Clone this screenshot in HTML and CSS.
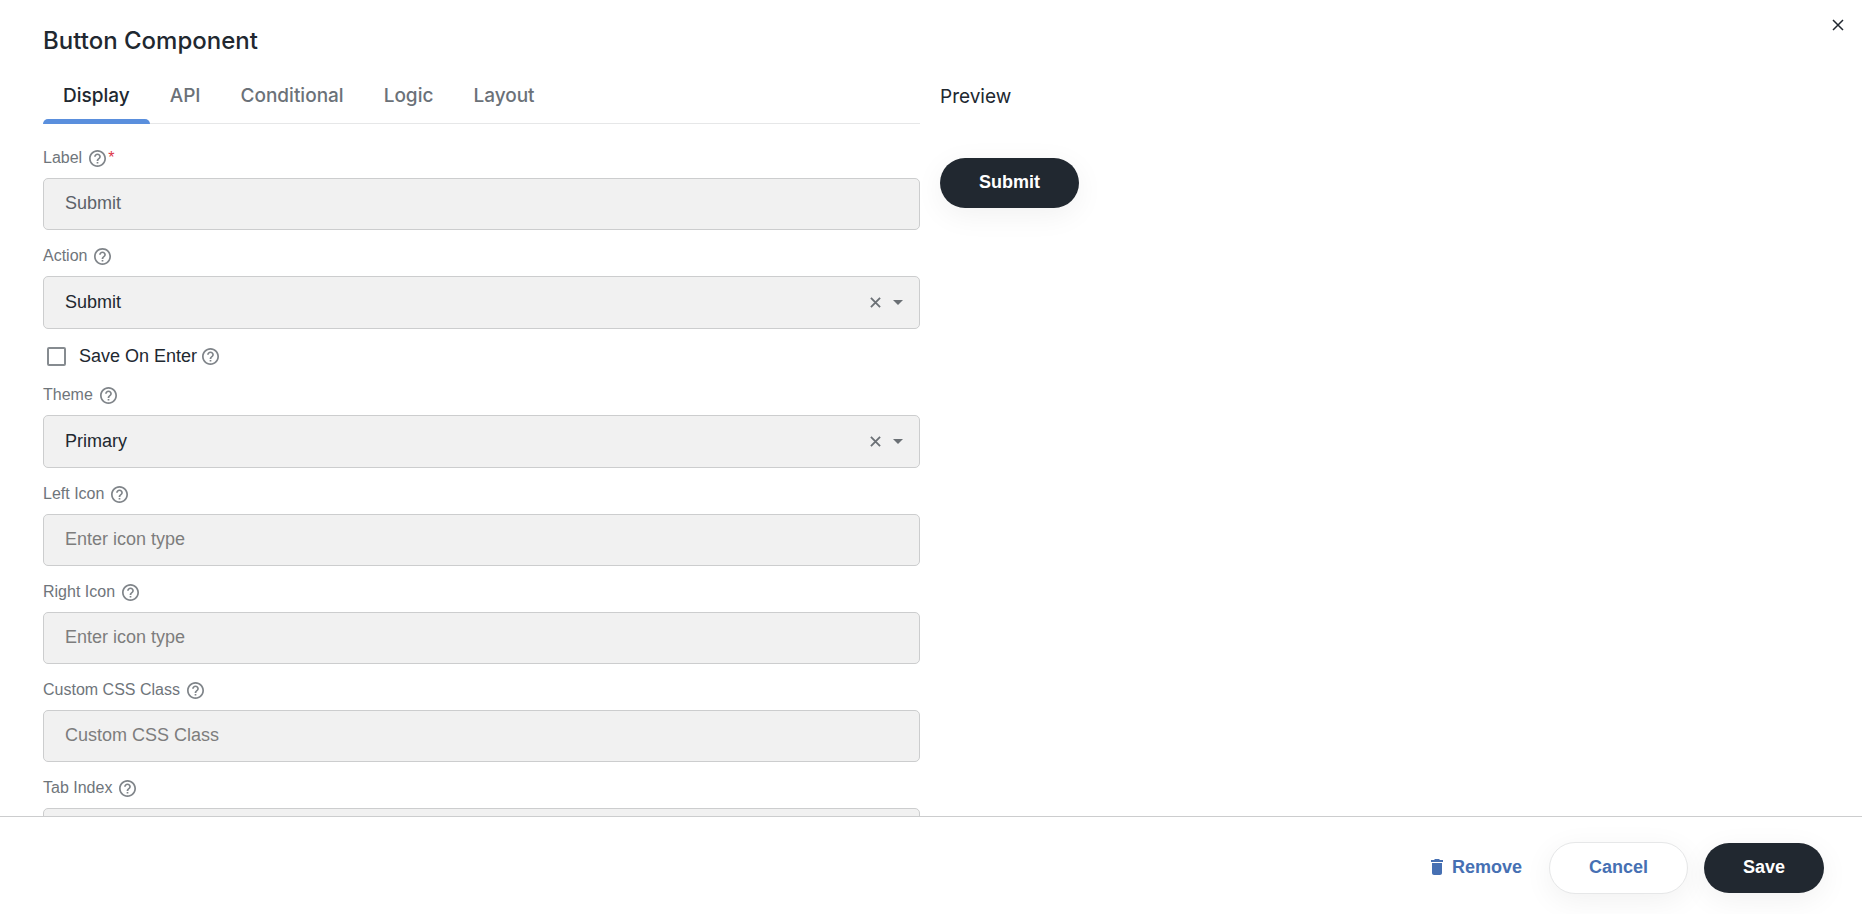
FILE: index.html
```html
<!DOCTYPE html>
<html lang="en">

<head>
    <meta charset="UTF-8">
    <meta name="viewport" content="width=device-width, initial-scale=1.0">
    <title>Button Component</title>
    <link rel="stylesheet" href="styles.css">
</head>

<body>
    <!-- Shared icons -->
    <svg class="icon-defs" aria-hidden="true">
        <symbol id="icon-help" viewBox="2 2 20 20">
            <path d="M11 18h2v-2h-2v2zm1-16C6.48 2 2 6.48 2 12s4.48 10 10 10 10-4.48 10-10S17.52 2 12 2zm0 18c-4.41 0-8-3.59-8-8s3.59-8 8-8 8 3.59 8 8-3.59 8-8 8zm0-14c-2.21 0-4 1.79-4 4h2c0-1.1.9-2 2-2s2 .9 2 2c0 2-3 1.75-3 5h2c0-2.25 3-2.5 3-5 0-2.21-1.79-4-4-4z"/>
        </symbol>
        <symbol id="icon-close" viewBox="0 0 12 12">
            <path d="M1 1l10 10M11 1L1 11" fill="none" stroke="currentColor"/>
        </symbol>
        <symbol id="icon-caret" viewBox="0 0 10 5">
            <path d="M0 0h10L5 5z"/>
        </symbol>
        <symbol id="icon-trash" viewBox="0 0 12 16">
            <path d="M4 0h4l1 1h3v2H0V1h3zM1 4h10v10c0 1.100-.900 2-2 2H3c-1.100 0-2-.900-2-2z"/>
        </symbol>
    </svg>

    <div class="dialog">
        <header class="dialog-header">
            <h1 class="title">Button Component</h1>
            <button type="button" class="close-button" aria-label="Close">
                <svg><use href="#icon-close"/></svg>
            </button>
        </header>

        <main class="dialog-body">
            <section class="settings">
                <nav class="tabs">
                    <a href="#display" class="tab active">Display</a>
                    <a href="#api" class="tab">API</a>
                    <a href="#conditional" class="tab">Conditional</a>
                    <a href="#logic" class="tab">Logic</a>
                    <a href="#layout" class="tab">Layout</a>
                </nav>

                <form id="display" class="fields">
                    <div class="field">
                        <label for="label">Label <svg class="help"><use href="#icon-help"/></svg><span class="required">*</span></label>
                        <input type="text" id="label" class="control" value="Submit" required>
                    </div>

                    <div class="field">
                        <label for="action">Action <svg class="help"><use href="#icon-help"/></svg></label>
                        <div class="select-wrapper">
                            <select id="action" class="control">
                                <option>Submit</option>
                            </select>
                            <div class="select-icons">
                                <button type="button" class="clear-button" aria-label="Clear action"><svg><use href="#icon-close"/></svg></button>
                                <svg class="caret"><use href="#icon-caret"/></svg>
                            </div>
                        </div>
                    </div>

                    <div class="check-field">
                        <input type="checkbox" id="saveOnEnter">
                        <label for="saveOnEnter">Save On Enter <svg class="help"><use href="#icon-help"/></svg></label>
                    </div>

                    <div class="field">
                        <label for="theme">Theme <svg class="help"><use href="#icon-help"/></svg></label>
                        <div class="select-wrapper">
                            <select id="theme" class="control">
                                <option>Primary</option>
                            </select>
                            <div class="select-icons">
                                <button type="button" class="clear-button" aria-label="Clear theme"><svg><use href="#icon-close"/></svg></button>
                                <svg class="caret"><use href="#icon-caret"/></svg>
                            </div>
                        </div>
                    </div>

                    <div class="field">
                        <label for="leftIcon">Left Icon <svg class="help"><use href="#icon-help"/></svg></label>
                        <input type="text" id="leftIcon" class="control" placeholder="Enter icon type">
                    </div>

                    <div class="field">
                        <label for="rightIcon">Right Icon <svg class="help"><use href="#icon-help"/></svg></label>
                        <input type="text" id="rightIcon" class="control" placeholder="Enter icon type">
                    </div>

                    <div class="field">
                        <label for="customClass">Custom CSS Class <svg class="help"><use href="#icon-help"/></svg></label>
                        <input type="text" id="customClass" class="control" placeholder="Custom CSS Class">
                    </div>

                    <div class="field">
                        <label for="tabIndex">Tab Index <svg class="help"><use href="#icon-help"/></svg></label>
                        <input type="text" id="tabIndex" class="control">
                    </div>
                </form>
            </section>

            <section class="preview">
                <h2 class="preview-title">Preview</h2>
                <button type="button" class="button button-primary">Submit</button>
            </section>
        </main>

        <footer class="dialog-footer">
            <button type="button" class="button button-link"><svg class="trash"><use href="#icon-trash"/></svg>Remove</button>
            <button type="button" class="button button-secondary">Cancel</button>
            <button type="button" class="button button-primary">Save</button>
        </footer>
    </div>
</body>

</html>
```
FILE: styles.css
```css
* {
    margin: 0;
    padding: 0;
    box-sizing: border-box;
}

body {
    font-family: 'Liberation Sans', Arial, sans-serif;
    font-size: 18px;
    color: #212830;
    background-color: #ffffff;
}

button,
input,
select {
    font: inherit;
    color: inherit;
}

svg {
    display: block;
    fill: currentColor;
}

.icon-defs {
    display: none;
}

.dialog {
    display: flex;
    flex-direction: column;
    height: 100vh;
}

/* Header */
.dialog-header {
    display: flex;
    justify-content: space-between;
    align-items: flex-start;
    padding: 18px 18px 0 43px;
}

.title {
    font-family: Inter, sans-serif;
    font-size: 24px;
    font-weight: 500;
    line-height: 46px;
}

.close-button {
    border: none;
    background: none;
    cursor: pointer;
    padding: 1px 0;
}

.close-button svg {
    width: 12px;
    height: 12px;
    stroke-width: 1.5;
}

/* Body */
.dialog-body {
    flex: 1;
    min-height: 0;
    overflow: hidden;
    display: grid;
    grid-template-columns: 1fr 1fr;
    gap: 20px;
    padding: 8px 45px 0 43px;
}

.tabs {
    display: flex;
    border-bottom: 1px solid #e6e7e8;
}

.tab {
    font-family: Inter, sans-serif;
    font-size: 19px;
    font-weight: 500;
    line-height: 47px;
    padding: 0 20px;
    color: #6b7178;
    text-decoration: none;
    border-bottom: 5px solid transparent;
    margin-bottom: -1px;
}

.tab.active {
    color: #212830;
    position: relative;
    border-bottom: none;
}

.tab.active::after {
    content: '';
    position: absolute;
    left: 0;
    right: 0;
    bottom: 0;
    height: 5px;
    border-radius: 5px 5px 0 0;
    background-color: #5a8fdd;
}

.fields {
    padding-top: 22px;
}

.field {
    margin-bottom: 14px;
}

.field label,
.check-field label {
    display: flex;
    align-items: center;
    gap: 7px;
}

.field label {
    font-size: 16px;
    line-height: 24px;
    margin-bottom: 8px;
    color: #6f757b;
}

.help {
    width: 17px;
    height: 17px;
    color: #7f8489;
}

.required {
    color: #dc3545;
    margin-left: -5px;
}

.control {
    display: block;
    width: 100%;
    height: 52px;
    padding: 0 21px 1px;
    border: 1px solid #cccdce;
    border-radius: 5px;
    background-color: #f1f1f1;
    color: #5c6269;
    appearance: none;
}

.control::placeholder {
    color: #7d7d7d;
}

select.control {
    height: 53px;
    color: #212830;
}

.control:focus {
    outline: none;
    border-color: #5a8fdd;
}

.select-wrapper {
    position: relative;
}

.select-icons {
    position: absolute;
    top: 0;
    right: 17px;
    height: 100%;
    display: flex;
    align-items: center;
    gap: 12px;
    color: #6b7075;
    pointer-events: none;
}

.clear-button {
    border: none;
    background: none;
    cursor: pointer;
    pointer-events: auto;
}

.clear-button svg {
    width: 11px;
    height: 11px;
    stroke-width: 2;
}

.caret {
    width: 10px;
    height: 5px;
}

.check-field {
    display: flex;
    align-items: center;
    gap: 13px;
    height: 26px;
    padding-left: 4px;
    margin-bottom: 14px;
}

.check-field input {
    appearance: none;
    width: 19px;
    height: 19px;
    border: 2px solid #868b90;
    border-radius: 2px;
}

.check-field label {
    gap: 5px;
}

.check-field input:checked {
    background-color: #5a8fdd;
}

/* Preview */
.preview-title {
    font-family: Inter, sans-serif;
    font-size: 19px;
    font-weight: 400;
    line-height: 50px;
    margin-bottom: 36px;
}

/* Buttons */
.button {
    height: 50px;
    padding: 0 39px 1px;
    border: none;
    border-radius: 26px;
    font-weight: 700;
    cursor: pointer;
}

.button-primary {
    background-color: #212830;
    color: #ffffff;
    box-shadow: 0 7px 30px rgba(0, 0, 0, 0.06);
}

.button-secondary {
    height: 52px;
    background-color: #ffffff;
    color: #4670b3;
    border: 1px solid #e6e7e8;
    box-shadow: 0 7px 30px rgba(0, 0, 0, 0.06);
}

.button-link {
    display: flex;
    align-items: center;
    gap: 9px;
    padding: 0 11px 1px;
    background: none;
    color: #4670b3;
}

.trash {
    width: 12px;
    height: 16px;
}

/* Footer */
.dialog-footer {
    display: flex;
    justify-content: flex-end;
    align-items: center;
    gap: 16px;
    height: 98px;
    padding: 4px 38px 0;
    border-top: 1px solid #cccdce;
}
```
